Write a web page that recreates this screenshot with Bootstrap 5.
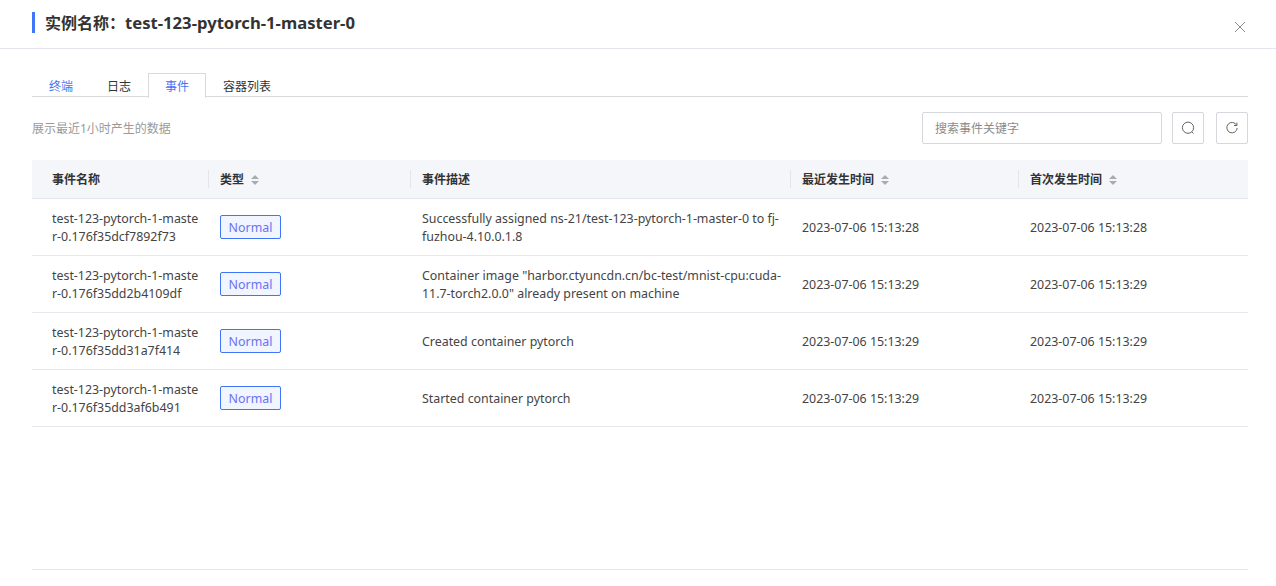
<!doctype html>
<html lang="zh-CN">
<head>
<meta charset="utf-8">
<title>实例详情</title>
<link href="https://cdn.jsdelivr.net/npm/bootstrap@5.3.0/dist/css/bootstrap.min.css" rel="stylesheet">
<style>
html, body { height: 100%; }
body { font-family: "Noto Sans", "Noto Sans CJK SC", sans-serif; font-size: 12px; color: #333; background: #fff; overflow: hidden; }
.dlg-head { height: 49px; border-bottom: 1px solid #e3e6f0; padding: 12px 30px 0 32px; }
.dlg-title { height: 21px; border-left: 3px solid #3f75f6; padding-left: 10px; font-size: 16px; font-weight: 700; line-height: 22px; color: #333; margin: 0; }
.title-latin { font-size: 16.65px; }
.dlg-close { width: 12px; height: 12px; margin-top: 9px; color: #8c8c8c; }
.dlg-body { padding: 24px 28px 0 32px; }
.tab-strip { border-bottom: 1px solid #d9d9de; height: 24px; }
.tab-strip .nav-link { height: 24px; padding: 0 16px; font-size: 12px; line-height: 25px; color: #333; border: 1px solid transparent; border-bottom: 0; border-radius: 0; margin: 0; }
.tab-strip .nav-link.tab-blue { color: #3f75f6; }
.tab-strip .nav-link.active { color: #3f75f6; background: #fff; border-color: #d9d9de; height: 25px; }
.tool-row { height: 32px; margin-top: 15px; margin-bottom: 16px; }
.hint-text { color: #9a9a9a; padding-top: 2px; }
.search-box { width: 240px; height: 32px; font-size: 12px; border: 1px solid #d5d7dc; border-radius: 2px; padding: 0 12px; color: #333; }
.search-box::placeholder { color: #8a8a8a; }
.icon-btn { width: 32px; height: 32px; padding: 0; border: 1px solid #d5d7dc; border-radius: 2px; background: #fff; color: #666; }
.btn-find { margin-left: 10px; }
.btn-reload { margin-left: 12px; }
.ev-table { table-layout: fixed; width: 1216px; margin: 0; font-size: 12px; color: #333; }
.ev-table th { height: 38px; background: #f5f6f9; font-weight: 700; padding: 2px 8px 0 11px; border-bottom: 1px solid #e3e6f0; position: relative; color: #333; vertical-align: middle; }
.ev-table th + th::before { content: ""; position: absolute; left: -1px; top: 10px; height: 18px; border-left: 1px solid #e3e5ea; }
.ev-table th:first-child, .ev-table td:first-child { padding-left: 20px; }
.ev-table td { height: 57px; padding: 2px 8px 0 11px; border-bottom: 1px solid #e6e8ee; line-height: 18px; vertical-align: middle; color: #444; word-break: break-word; font-size: 12.4px; }
.ev-table td:first-child { word-break: break-all; }
.c-name { width: 177px; } .c-type { width: 202px; } .c-desc { width: 380px; } .c-time { width: 228px; } .c-first { width: 229px; }
.sort-mark { display: inline-block; width: 8px; height: 10px; margin-left: 7px; vertical-align: -1px; color: #a8abb2; }
.type-tag { display: inline-block; width: 61px; height: 24px; line-height: 23px; margin-bottom: 2px; text-align: center; border: 1px solid #3f75f6; border-radius: 2px; background: #f0f5ff; color: #6a72f5; font-size: 12.4px; }
.foot-rule { border-top: 1px solid #e6e8ee; margin-top: 142px; }
</style>
</head>
<body>
<header class="dlg-head d-flex justify-content-between align-items-start">
  <h1 class="dlg-title">实例名称：<span class="title-latin">test-123-pytorch-1-master-0</span></h1>
  <svg class="dlg-close" viewBox="0 0 12 12" fill="none" stroke="currentColor" stroke-width="1"><path d="M1 1l10 10M11 1L1 11"/></svg>
</header>
<main class="dlg-body">
  <ul class="nav tab-strip">
    <li class="nav-item"><a class="nav-link tab-blue" href="#">终端</a></li>
    <li class="nav-item"><a class="nav-link" href="#">日志</a></li>
    <li class="nav-item"><a class="nav-link active" href="#">事件</a></li>
    <li class="nav-item"><a class="nav-link" href="#">容器列表</a></li>
  </ul>
  <div class="tool-row d-flex align-items-center">
    <span class="hint-text me-auto">展示最近1小时产生的数据</span>
    <input class="form-control search-box" type="text" placeholder="搜索事件关键字">
    <button class="btn icon-btn btn-find d-flex align-items-center justify-content-center" type="button" aria-label="搜索">
      <svg width="14" height="14" viewBox="0 0 14 14" fill="none" stroke="currentColor" stroke-width="1"><circle cx="7" cy="6.7" r="5.6"/><path d="M10.8 10.8l1.8 1.8"/></svg>
    </button>
    <button class="btn icon-btn btn-reload d-flex align-items-center justify-content-center" type="button" aria-label="刷新">
      <svg width="14" height="14" viewBox="0 0 14 14" fill="none" stroke="currentColor" stroke-width="1"><path d="M11.6 4.2A5.2 5.2 0 1 0 12.2 7"/><path d="M11.9 1.6v2.9H9"/></svg>
    </button>
  </div>
  <table class="table ev-table">
    <colgroup><col class="c-name"><col class="c-type"><col class="c-desc"><col class="c-time"><col class="c-first"></colgroup>
    <thead>
      <tr>
        <th>事件名称</th>
        <th>类型<svg class="sort-mark" viewBox="0 0 8 10" fill="currentColor"><path d="M4 0l4 4H0zM0 6h8l-4 4z"/></svg></th>
        <th>事件描述</th>
        <th>最近发生时间<svg class="sort-mark" viewBox="0 0 8 10" fill="currentColor"><path d="M4 0l4 4H0zM0 6h8l-4 4z"/></svg></th>
        <th>首次发生时间<svg class="sort-mark" viewBox="0 0 8 10" fill="currentColor"><path d="M4 0l4 4H0zM0 6h8l-4 4z"/></svg></th>
      </tr>
    </thead>
    <tbody>
      <tr><td>test-123-pytorch-1-master-0.176f35dcf7892f73</td><td><span class="type-tag">Normal</span></td><td>Successfully assigned ns-21/test-123-pytorch-1-master-0 to fj-fuzhou-4.10.0.1.8</td><td>2023-07-06 15:13:28</td><td>2023-07-06 15:13:28</td></tr>
      <tr><td>test-123-pytorch-1-master-0.176f35dd2b4109df</td><td><span class="type-tag">Normal</span></td><td>Container image "harbor.ctyuncdn.cn/bc-test/mnist-cpu:cuda-11.7-torch2.0.0" already present on machine</td><td>2023-07-06 15:13:29</td><td>2023-07-06 15:13:29</td></tr>
      <tr><td>test-123-pytorch-1-master-0.176f35dd31a7f414</td><td><span class="type-tag">Normal</span></td><td>Created container pytorch</td><td>2023-07-06 15:13:29</td><td>2023-07-06 15:13:29</td></tr>
      <tr><td>test-123-pytorch-1-master-0.176f35dd3af6b491</td><td><span class="type-tag">Normal</span></td><td>Started container pytorch</td><td>2023-07-06 15:13:29</td><td>2023-07-06 15:13:29</td></tr>
    </tbody>
  </table>
  <div class="foot-rule"></div>
</main>
<script src="https://cdn.jsdelivr.net/npm/bootstrap@5.3.0/dist/js/bootstrap.bundle.min.js"></script>
</body>
</html>
